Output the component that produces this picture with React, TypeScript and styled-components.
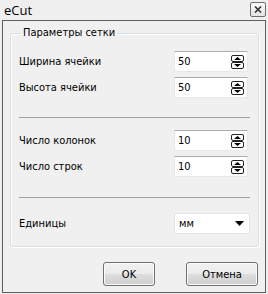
import styled, { createGlobalStyle } from "styled-components";

const GlobalStyle = createGlobalStyle`
  html, body {
    margin: 0;
    padding: 0;
    background: #f0f0f0;
  }
  #root {
    width: 268px;
    height: 294px;
  }
`;

const Window = styled.div`
  width: 268px;
  height: 294px;
  display: flex;
  flex-direction: column;
  background: #efefef;
  font-family: "DejaVu Sans Condensed", "DejaVu Sans", Tahoma, sans-serif;
  font-stretch: condensed;
  font-size: 11px;
  color: #000;
  box-sizing: border-box;
`;

const TitleBar = styled.div`
  height: 20px;
  flex: none;
  display: flex;
  align-items: center;
  justify-content: space-between;
  padding: 0 2px 0 4px;
  box-sizing: border-box;
`;

const Title = styled.span`
  font-family: "Open Sans", "DejaVu Sans", sans-serif;
  font-stretch: normal;
  font-size: 13px;
  margin-top: -1px;
`;

const CloseButton = styled.div`
  width: 14px;
  height: 13px;
  border: 1px solid #6f6f6f;
  border-radius: 2px;
  background: linear-gradient(#fafafa, #e4e4e4);
  display: flex;
  align-items: center;
  justify-content: center;
  margin-top: -1px;
`;

const Frame = styled.div`
  flex: 1;
  margin: 0 2px 1px;
  border: 1px solid #5e5e5e;
  background: #f0f0f0;
  display: flex;
  flex-direction: column;
  padding: 5px 6px 0 7px;
`;

const Group = styled.fieldset`
  margin: 0;
  padding: 11px 10px 12px 7px;
  border: 1px solid #d5dfe5;
  border-radius: 3px;
  box-shadow: inset 1px 1px 0 #fff, 1px 1px 0 #fff;
`;

const Legend = styled.legend`
  padding: 0 2px;
  margin-left: 3px;
  line-height: 14px;
`;

const Row = styled.div<{ $top?: number }>`
  display: flex;
  align-items: center;
  justify-content: space-between;
  height: 21px;
  margin-top: ${({ $top }) => $top ?? 0}px;
`;

const Label = styled.span`
  padding-left: 1px;
`;

const SpinBox = styled.div`
  width: 74px;
  height: 21px;
  box-sizing: border-box;
  background: #fff;
  border: 1px solid #e3e9ef;
  border-top-color: #abadb3;
  display: flex;
  align-items: center;
  justify-content: space-between;
  padding: 0 3px 0 3px;
`;

const Combo = styled(SpinBox)`
  width: 76px;
  border-color: #e3e3e3;
  padding: 0 5px 0 4px;
  margin-right: -2px;
`;

const Separator = styled.div<{ $above: number; $below: number }>`
  height: 1px;
  background: #a0a0a0;
  margin: ${({ $above, $below }) => `${$above}px -2px ${$below}px 1px`};
`;

const Buttons = styled.div`
  display: flex;
  justify-content: flex-end;
  gap: 31px;
  margin-top: 15px;
  padding-right: 1px;
`;

const Button = styled.button<{ $width: number }>`
  width: ${({ $width }) => $width}px;
  height: 24px;
  border: 1px solid #707070;
  border-radius: 3px;
  background: linear-gradient(#f2f2f2 0%, #ebebeb 50%, #dddddd 51%, #cfcfcf 100%);
  box-shadow: inset 0 0 0 1px #fcfcfc;
  font-family: inherit;
  font-stretch: condensed;
  font-size: 11px;
  color: #000;
  padding: 0;
`;

function SpinIcon() {
  return (
    <svg width="13" height="14" viewBox="0 0 13 14">
      <rect x="0.5" y="0.5" width="12" height="6" rx="1.5" fill="#fff" stroke="#222" />
      <rect x="0.5" y="7.5" width="12" height="6" rx="1.5" fill="#fff" stroke="#222" />
      <path d="M6.5 2 L10 5 L3 5 Z" fill="#000" />
      <path d="M3 9 L10 9 L6.5 12 Z" fill="#000" />
    </svg>
  );
}

function ArrowDown() {
  return (
    <svg width="9" height="5" viewBox="0 0 9 5">
      <path d="M0 0 L9 0 L4.5 5 Z" fill="#000" />
    </svg>
  );
}

function CloseIcon() {
  return (
    <svg width="8" height="7" viewBox="0 0 8 7">
      <path d="M1 0.5 L7 6.5 M7 0.5 L1 6.5" stroke="#333" strokeWidth="1.6" />
    </svg>
  );
}

function Spin({ value }: { value: string }) {
  return (
    <SpinBox>
      <span>{value}</span>
      <SpinIcon />
    </SpinBox>
  );
}

export default function App() {
  return (
    <>
      <GlobalStyle />
      <Window>
        <TitleBar>
          <Title>eCut</Title>
          <CloseButton>
            <CloseIcon />
          </CloseButton>
        </TitleBar>
        <Frame>
          <Group>
            <Legend>Параметры сетки</Legend>
            <Row>
              <Label>Ширина ячейки</Label>
              <Spin value="50" />
            </Row>
            <Row $top={5}>
              <Label>Высота ячейки</Label>
              <Spin value="50" />
            </Row>
            <Separator $above={19} $below={12} />
            <Row>
              <Label>Число колонок</Label>
              <Spin value="10" />
            </Row>
            <Row $top={5}>
              <Label>Число строк</Label>
              <Spin value="10" />
            </Row>
            <Separator $above={20} $below={15} />
            <Row>
              <Label>Единицы</Label>
              <Combo>
                <span>мм</span>
                <ArrowDown />
              </Combo>
            </Row>
          </Group>
          <Buttons>
            <Button $width={52}>OK</Button>
            <Button $width={72}>Отмена</Button>
          </Buttons>
        </Frame>
      </Window>
    </>
  );
}
